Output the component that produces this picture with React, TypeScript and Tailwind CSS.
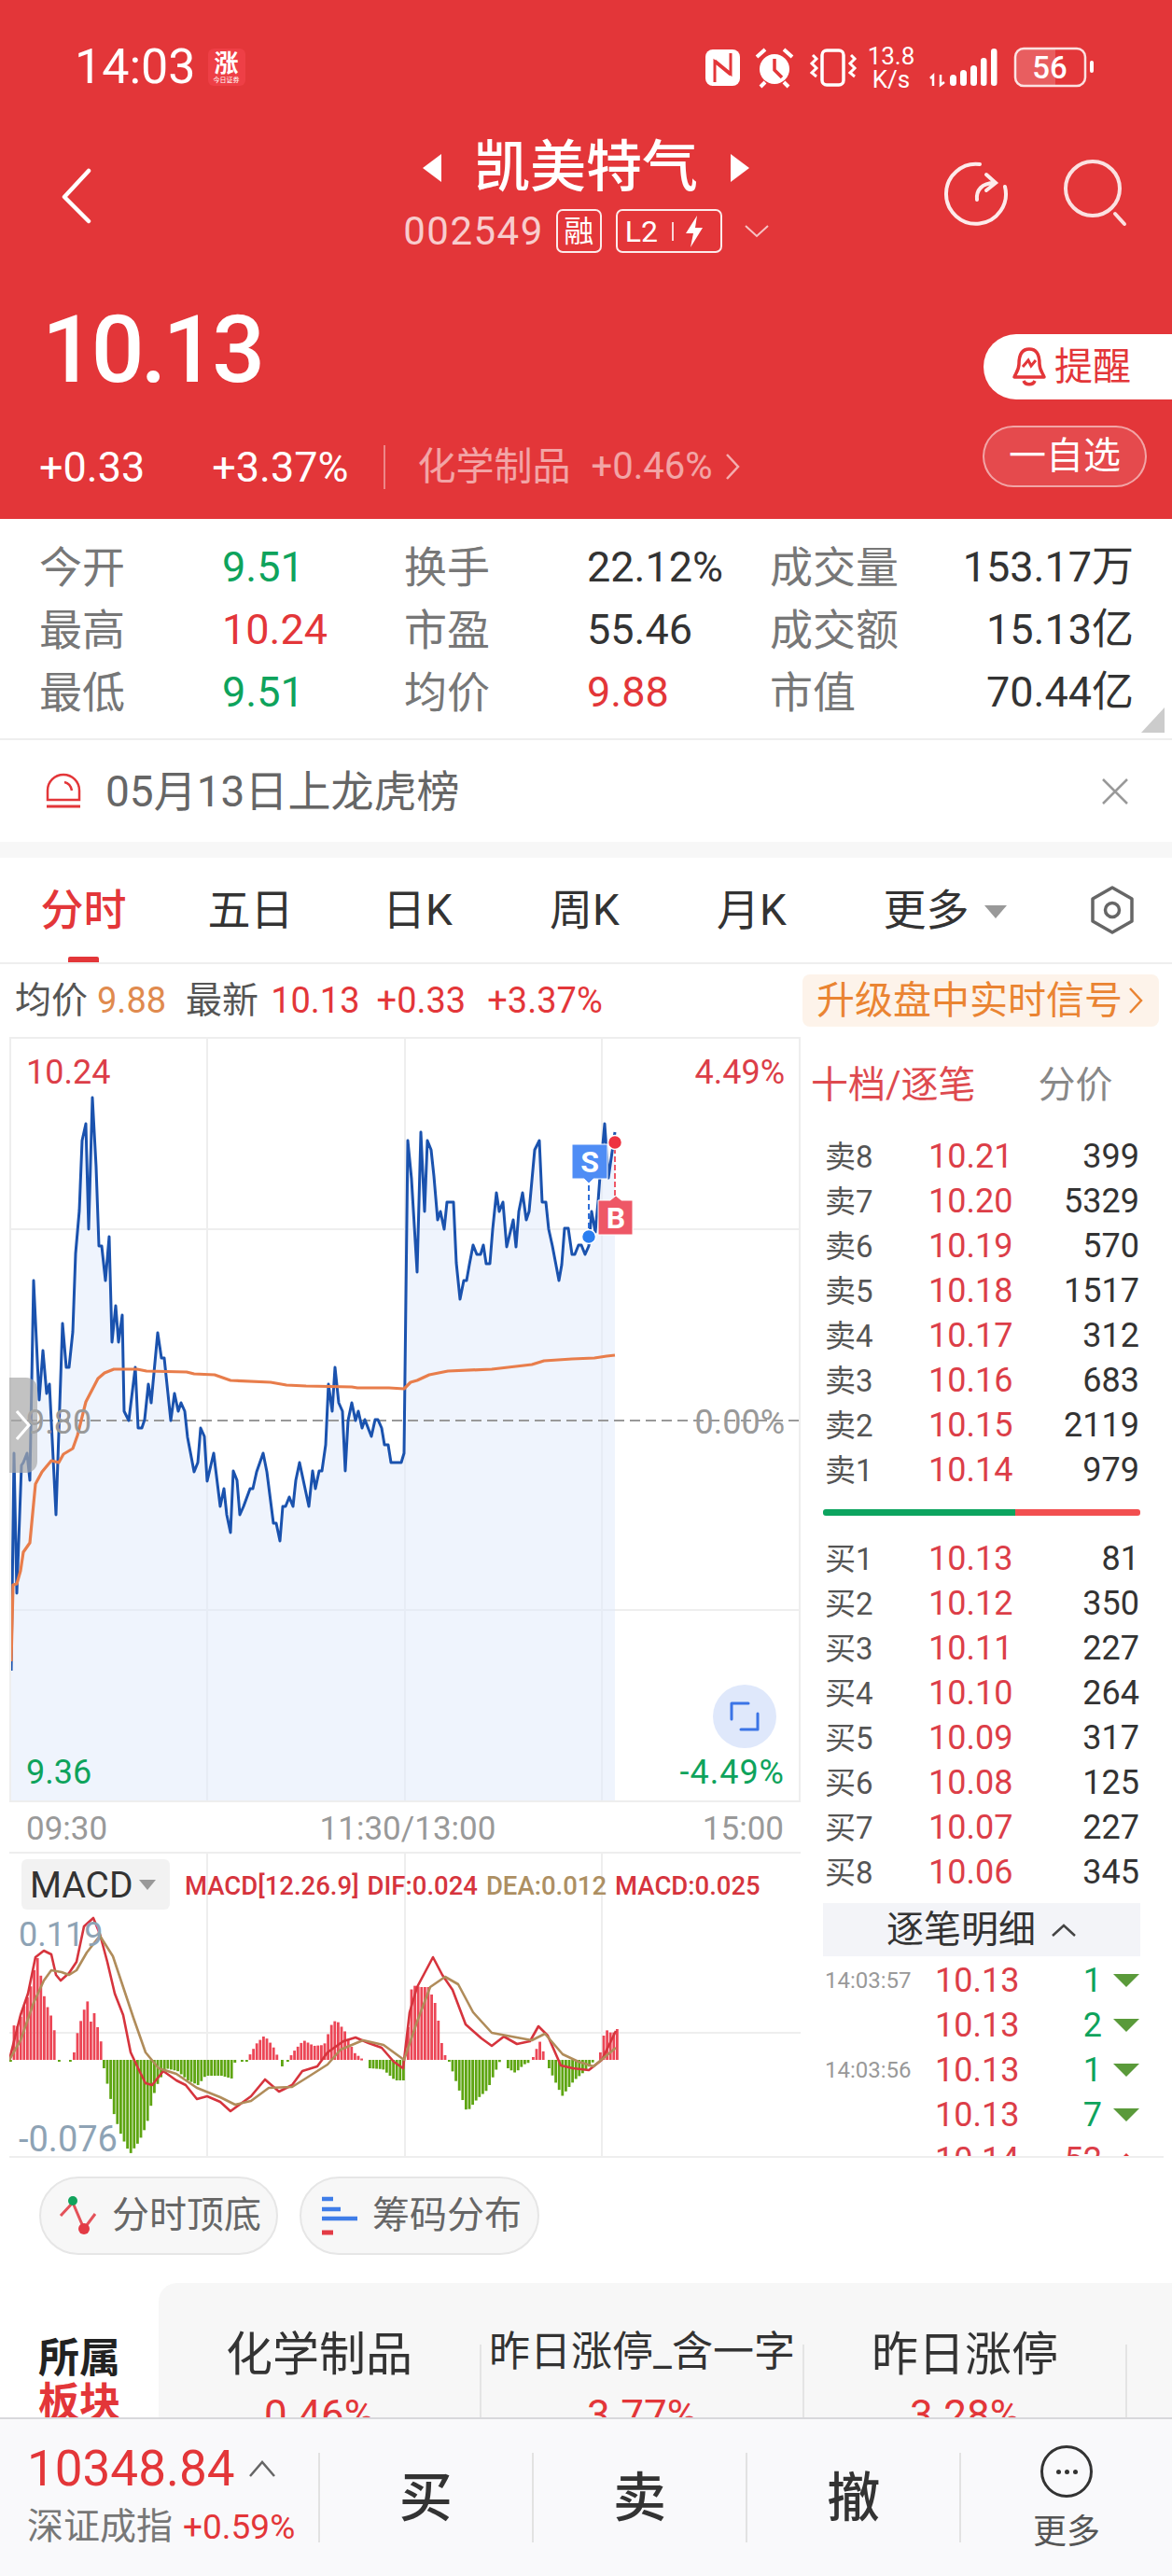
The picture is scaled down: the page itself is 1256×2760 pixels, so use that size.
import React from "react";

// traced price line, page coordinates
const PRICE: number[][] = [
	[12, 1790], [15, 1557], [18, 1707], [23, 1570], [25, 1567], [29, 1557], [32, 1586], [36, 1372], [42, 1500], [46, 1447], [50, 1493], [53, 1483], [60, 1623],
	[67, 1418], [71, 1465], [74, 1465], [78, 1427], [81, 1343], [85, 1297], [88, 1222], [92, 1204], [95, 1317], [99, 1176], [103, 1250], [106, 1335], [109, 1335],
	[113, 1372], [117, 1325], [120, 1438], [124, 1399], [127, 1438], [131, 1409], [133, 1512], [138, 1522], [145, 1465], [148, 1530], [152, 1530], [155, 1521],
	[159, 1483], [162, 1503], [169, 1428], [173, 1455], [176, 1455], [183, 1522], [187, 1493], [191, 1512], [194, 1503], [198, 1512], [201, 1540], [208, 1577],
	[212, 1567], [215, 1530], [219, 1539], [222, 1587], [229, 1557], [236, 1614], [240, 1595], [243, 1623], [247, 1642], [250, 1576], [254, 1586], [257, 1623],
	[261, 1614], [268, 1595], [271, 1595], [275, 1577], [282, 1557], [286, 1577], [293, 1632], [296, 1632], [300, 1651], [303, 1614], [306, 1614], [310, 1604],
	[314, 1614], [317, 1586], [321, 1567], [331, 1614], [335, 1576], [338, 1595], [342, 1576], [345, 1576], [349, 1548], [352, 1483], [356, 1512], [359, 1465],
	[363, 1503], [367, 1512], [370, 1576], [373, 1522], [377, 1503], [381, 1522], [384, 1512], [388, 1530], [391, 1521], [398, 1539], [402, 1521], [405, 1521],
	[409, 1530], [412, 1548], [416, 1548], [419, 1567], [430, 1567], [433, 1557], [437, 1222], [441, 1263], [447, 1363], [451, 1213], [455, 1298], [458, 1222],
	[462, 1232], [465, 1260], [469, 1307], [472, 1298], [476, 1317], [479, 1288], [486, 1288], [489, 1353], [493, 1392], [497, 1372], [500, 1372], [503, 1355],
	[507, 1334], [511, 1344], [515, 1344], [518, 1334], [521, 1354], [525, 1354], [528, 1317], [532, 1278], [535, 1298], [539, 1288], [543, 1336], [550, 1307],
	[553, 1336], [556, 1298], [560, 1278], [564, 1307], [567, 1298], [573, 1232], [578, 1222], [581, 1288], [585, 1288], [588, 1317], [592, 1335], [599, 1372],
	[602, 1355], [605, 1316], [609, 1316], [613, 1344], [616, 1344], [620, 1334], [623, 1334], [627, 1344], [631, 1335], [634, 1298], [638, 1320], [641, 1287],
	[643, 1260], [648, 1204], [652, 1262], [659, 1213],
];

const AVG: number[][] = [
	[12, 1780], [14, 1698], [18, 1697], [22, 1683], [25, 1663], [32, 1653], [38, 1590], [45, 1577], [55, 1565], [63, 1567], [68, 1558], [78, 1552], [83, 1538],
	[92, 1502], [105, 1477], [112, 1471], [122, 1467], [147, 1467], [157, 1469], [200, 1470], [208, 1472], [230, 1473], [247, 1479], [290, 1481], [307, 1484],
	[328, 1485], [377, 1486], [383, 1487], [417, 1487], [433, 1488], [440, 1481], [447, 1479], [460, 1473], [480, 1469], [527, 1467], [570, 1462], [583, 1458],
	[613, 1456], [637, 1455], [650, 1453], [659, 1452],
];

const DIF: number[][] = [
	[10, 2208], [22, 2160], [30, 2137], [38, 2098], [47, 2091], [55, 2095], [60, 2117], [65, 2123], [74, 2115], [82, 2103], [90, 2065], [100, 2056], [107, 2073],
	[115, 2103], [123, 2137], [132, 2160], [140, 2200], [148, 2217], [156, 2233], [163, 2235], [175, 2220], [189, 2230], [199, 2235], [211, 2250], [222, 2247],
	[236, 2253], [247, 2263], [258, 2255], [269, 2247], [284, 2229], [299, 2242], [313, 2235], [324, 2220], [340, 2215], [351, 2200], [368, 2188], [381, 2184],
	[395, 2190], [409, 2195], [422, 2210], [432, 2217], [439, 2157], [447, 2130], [455, 2115], [464, 2098], [474, 2117], [485, 2133], [499, 2170], [516, 2185],
	[527, 2193], [540, 2183], [554, 2191], [568, 2188], [577, 2172], [587, 2182], [601, 2214], [614, 2217], [631, 2219], [645, 2208], [660, 2177],
];

const DEA: number[][] = [
	[10, 2208], [22, 2187], [36, 2147], [47, 2123], [55, 2112], [66, 2114], [74, 2117], [82, 2112], [93, 2093], [107, 2075], [121, 2097], [132, 2130], [143, 2163],
	[156, 2200], [170, 2217], [189, 2223], [211, 2238], [236, 2248], [252, 2256], [269, 2252], [288, 2238], [313, 2237], [329, 2227], [351, 2213], [365, 2197],
	[389, 2187], [411, 2192], [433, 2208], [447, 2167], [461, 2130], [477, 2119], [491, 2127], [507, 2157], [527, 2179], [543, 2182], [570, 2187], [584, 2180],
	[603, 2202], [620, 2210], [636, 2215], [660, 2195],
];

// histogram envelope, segments of [x, y] in page coordinates
const BARS: number[][][] = [
	[[10, 2208], [14, 2167], [18, 2173], [22, 2157], [27, 2143], [30, 2137], [36, 2108], [40, 2095], [44, 2133], [49, 2150], [55, 2165], [59, 2190]],
	[[62, 2208], [64, 2225], [65, 2208]],
	[[74, 2208], [75, 2211]],
	[[78, 2200], [82, 2177], [88, 2157], [92, 2143], [96, 2167], [100, 2157], [104, 2177], [108, 2193]],
	[[110, 2217], [115, 2240], [121, 2267], [129, 2290], [138, 2309], [148, 2295], [156, 2277], [162, 2250], [166, 2237], [176, 2217], [189, 2220], [200, 2230], [211, 2235], [219, 2225], [236, 2225], [247, 2228], [251, 2208]],
	[[258, 2210], [259, 2208]],
	[[263, 2208], [274, 2190], [282, 2182], [291, 2193], [298, 2208]],
	[[301, 2215]],
	[[307, 2208], [315, 2197], [324, 2187], [335, 2193], [346, 2192], [354, 2170], [359, 2165], [368, 2177], [378, 2200], [388, 2208]],
	[[395, 2217], [409, 2218], [422, 2230], [433, 2230]],
	[[436, 2173], [440, 2128], [450, 2130], [458, 2130], [466, 2150], [472, 2190], [477, 2208]],
	[[480, 2210], [488, 2233], [499, 2264], [510, 2250], [521, 2240], [535, 2208]],
	[[543, 2217], [551, 2222], [560, 2213], [568, 2210]],
	[[570, 2205], [577, 2188], [584, 2208]],
	[[587, 2217], [601, 2247], [614, 2230], [628, 2218], [636, 2208]],
	[[642, 2200], [647, 2175], [655, 2180], [660, 2175]],
];

const barRects = () => {
	const out: { x: number; y: number; h: number; up: boolean }[] = [];
	BARS.forEach((seg) => {
		const start = seg[0][0];
		const end = seg[seg.length - 1][0];
		for (let x = start; x <= end + 0.01; x += 3.6) {
			let y = seg[seg.length - 1][1];
			for (let i = 0; i < seg.length - 1; i++) {
				if (x >= seg[i][0] && x <= seg[i + 1][0]) {
					const t = (x - seg[i][0]) / (seg[i + 1][0] - seg[i][0]);
					y = seg[i][1] + (seg[i + 1][1] - seg[i][1]) * t;
				}
			}
			const up = y < 2208;
			out.push({ x, y: up ? y : 2208, h: Math.max(Math.abs(y - 2208), 2), up });
		}
	});
	return out;
};

const pts = (a: number[][]) => a.map((p) => p.join(",")).join(" ");

const STATS = [
	["今开", "9.51", "text-[#0ea35c]", "换手", "22.12%", "text-[#333333]", "成交量", "153.17万"],
	["最高", "10.24", "text-[#e33639]", "市盈", "55.46", "text-[#333333]", "成交额", "15.13亿"],
	["最低", "9.51", "text-[#0ea35c]", "均价", "9.88", "text-[#e33639]", "市值", "70.44亿"],
];
const SELL = [
	["卖8", "10.21", "399"], ["卖7", "10.20", "5329"], ["卖6", "10.19", "570"], ["卖5", "10.18", "1517"],
	["卖4", "10.17", "312"], ["卖3", "10.16", "683"], ["卖2", "10.15", "2119"], ["卖1", "10.14", "979"],
];
const BUY = [
	["买1", "10.13", "81"], ["买2", "10.12", "350"], ["买3", "10.11", "227"], ["买4", "10.10", "264"],
	["买5", "10.09", "317"], ["买6", "10.08", "125"], ["买7", "10.07", "227"], ["买8", "10.06", "345"],
];
const TICKS = [
	["14:03:57", "10.13", "1", false], ["", "10.13", "2", false], ["14:03:56", "10.13", "1", false],
	["", "10.13", "7", false], ["", "10.14", "52", true],
] as [string, string, string, boolean][];
const SECTORS = [
	["化学制品", "0.46%", "text-[50px]"],
	["昨日涨停_含一字", "3.77%", "text-[44px]"],
	["昨日涨停", "3.28%", "text-[50px]"],
];

const BookRow = ({ row }: { row: string[] }) => (
	<div className="flex h-[48px] items-center">
		<span className="w-[113px] pl-[2px] text-[33px] text-[#555555]">{row[0]}</span>
		<span className="text-[36px] text-[#dc3e48]">{row[1]}</span>
		<span className="ml-auto pr-[1px] text-[36px] text-[#333333]">{row[2]}</span>
	</div>
);

const StatusBar = () => (
	<div className="mt-[40px] flex h-[64px] items-center pl-[80px]">
		<span className="text-[52px] leading-none">14:03</span>
		<div className="ml-[13px] flex h-[40px] w-[40px] flex-col items-center justify-center rounded-[6px] bg-[#ee3f46] leading-none">
			<span className="text-[26px] font-bold leading-[28px]">涨</span>
			<span className="text-[7px] leading-[8px]">今日证券</span>
		</div>
		<svg viewBox="750 40 430 64" className="ml-auto mr-[76px] h-[64px] w-[430px]">
			<rect x="756" y="53" width="37" height="39" rx="8" fill="#fff" />
			<path d="M766 88V66L783 80M783 57V79L766 65" stroke="#e33639" strokeWidth="3" fill="none" />
			<circle cx="830" cy="74" r="16" fill="#fff" />
			<path d="M830 63V75L838 83" stroke="#e33639" strokeWidth="3.5" fill="none" />
			<path d="M811 61L820 53M849 61L840 53M820 88L815 93M840 88L845 93" stroke="#fff" strokeWidth="4" fill="none" />
			<rect x="881" y="54" width="23" height="37" rx="5" stroke="#fff" strokeWidth="3.5" fill="none" />
			<path d="M871 59L875 63L870 68L875 73L870 78L875 82M912 59L916 63L911 68L916 73L911 78L916 82" stroke="#fff" strokeWidth="3" fill="none" />
			<text x="955" y="69" textAnchor="middle" fontSize="26" fill="#fff">13.8</text>
			<text x="955" y="94" textAnchor="middle" fontSize="26" fill="#fff">K/s</text>
			<path d="M1000 92V81L997 84M1008 80V91L1012 88" stroke="#fff" strokeWidth="2.5" fill="none" />
			<rect x="1018" y="80" width="7" height="12" rx="3.5" fill="#fff" />
			<rect x="1029" y="75" width="7" height="17" rx="3.5" fill="#fff" />
			<rect x="1040" y="70" width="7" height="22" rx="3.5" fill="#fff" />
			<rect x="1051" y="62" width="6.5" height="30" rx="3.2" fill="#fff" />
			<rect x="1062" y="52" width="6.5" height="40" rx="3.2" fill="#fff" />
			<path d="M1096 53H1131V91H1096A8 8 0 0 1 1088 83V61A8 8 0 0 1 1096 53Z" fill="#fff" fillOpacity="0.2" />
			<rect x="1088" y="52" width="75" height="40" rx="9" stroke="#fff" strokeOpacity="0.85" strokeWidth="2.5" fill="none" />
			<text x="1125" y="84" textAnchor="middle" fontSize="33" fontWeight="500" fill="#fff">56</text>
			<rect x="1168" y="65" width="4" height="13" rx="2" fill="#fff" />
		</svg>
	</div>
);

const Header = () => (
	<header className="flex h-[556px] flex-col bg-[#e33639] text-white">
		<StatusBar />
		{/* title */}
		<div className="mt-[40px] flex h-[140px] items-start">
			<svg viewBox="0 0 40 60" className="ml-[62px] mt-[36px] h-[60px] w-[40px]">
				<path d="M33 3L7 31L33 57" stroke="#fff" strokeWidth="4.5" fill="none" strokeLinecap="round" strokeLinejoin="round" />
			</svg>
			<div className="ml-[326px] flex w-[400px] flex-col items-center">
				<div className="flex h-[72px] items-center">
					<span className="h-0 w-0 border-y-[15px] border-r-[20px] border-y-transparent border-r-white" />
					<span className="mx-[35px] text-[60px] font-medium leading-none">凯美特气</span>
					<span className="h-0 w-0 border-y-[15px] border-l-[20px] border-y-transparent border-l-white" />
				</div>
				<div className="mt-[8px] flex h-[47px] items-center">
					<span className="text-[42px] leading-none tracking-[1.5px] text-white/75">002549</span>
					<span className="ml-[13px] flex h-[47px] w-[49px] items-center justify-center rounded-[7px] border-2 border-white/90 text-[32px] leading-none">融</span>
					<span className="ml-[15px] flex h-[47px] w-[114px] items-center rounded-[7px] border-2 border-white/90 pl-[8px] text-[32px] leading-none">
						L2
						<span className="ml-[15px] h-[20px] w-[2px] bg-white/80" />
						<svg viewBox="0 0 24 36" className="ml-[10px] h-[36px] w-[24px]">
							<path d="M15 1L3 20H11L8 35L21 14H13Z" fill="#fff" />
						</svg>
					</span>
					<svg viewBox="0 0 26 14" className="ml-[24px] h-[14px] w-[26px]">
						<path d="M1 1L13 12L25 1" stroke="#fff" strokeOpacity="0.7" strokeWidth="2" fill="none" />
					</svg>
				</div>
			</div>
			<svg viewBox="1005 165 210 82" className="ml-auto mr-[41px] mt-[21px] h-[82px] w-[210px]">
				<path d="M1050 176A32 32 0 1 0 1077 200" stroke="#fff" strokeOpacity="0.9" strokeWidth="4" fill="none" strokeLinecap="round" />
				<path d="M1047 214C1046 204 1052 196 1066 196M1057 187L1067 196L1057 204" stroke="#fff" strokeOpacity="0.9" strokeWidth="4" fill="none" strokeLinecap="round" />
				<circle cx="1171" cy="202" r="29" stroke="#fff" strokeOpacity="0.85" strokeWidth="4" fill="none" />
				<path d="M1195 229L1205 240" stroke="#fff" strokeOpacity="0.85" strokeWidth="4" strokeLinecap="round" />
			</svg>
		</div>
		{/* price */}
		<div className="mt-[74px] flex h-[70px] items-center justify-between">
			<span className="mb-[36px] ml-[45px] text-[100px] font-medium leading-none tracking-[-4px]">10.13</span>
			<div className="flex h-[70px] w-[202px] items-center rounded-l-[35px] bg-white pl-[30px] text-[#e33639]">
				<svg viewBox="0 0 38 44" className="h-[44px] w-[38px]">
					<path d="M19 3C10 3 8 11 8 19C8 25 5 28 3 33H35C33 28 30 25 30 19C30 11 28 3 19 3Z" stroke="#e33639" strokeWidth="3.5" fill="none" strokeLinejoin="round" />
					<path d="M12 22L18 15L21 21L26 15" stroke="#e33639" strokeWidth="3" fill="none" />
					<path d="M13 37C15 42 23 42 25 37" stroke="#e33639" strokeWidth="3.5" fill="none" />
				</svg>
				<span className="ml-[8px] text-[41px] leading-none">提醒</span>
			</div>
		</div>
		<div className="mt-[28px] flex h-[66px] items-center">
			<div className="flex items-center pt-[22px]">
				<span className="ml-[42px] text-[45px] leading-none">+0.33</span>
				<span className="ml-[72px] text-[45px] leading-none">+3.37%</span>
				<span className="ml-[37px] h-[47px] w-[2px] bg-white/40" />
				<span className="ml-[35px] text-[41px] leading-none text-white/55">化学制品</span>
				<span className="ml-[22px] text-[40px] leading-none text-white/55">+0.46%</span>
				<svg viewBox="0 0 16 30" className="ml-[13px] h-[30px] w-[16px]">
					<path d="M2 2L14 15L2 28" stroke="#fff" strokeOpacity="0.6" strokeWidth="2.5" fill="none" />
				</svg>
			</div>
			<span className="ml-auto mr-[27px] flex h-[66px] w-[176px] items-center justify-center rounded-[33px] border-2 border-white/50 bg-white/10 text-[40px] leading-none">一自选</span>
		</div>
	</header>
);

const Stats = () => (
	<section className="relative h-[237px] border-b-2 border-[#eeeeee] pt-[18px]">
		{STATS.map((r) => (
			<div key={r[0]} className="ml-[42px] grid h-[67px] grid-cols-[196px_195px_196px_196px_150px_240px] items-center text-[45px] leading-none">
				<span className="text-[46px] text-[#777777]">{r[0]}</span>
				<span className={r[2]}>{r[1]}</span>
				<span className="text-[46px] text-[#777777]">{r[3]}</span>
				<span className={r[5]}>{r[4]}</span>
				<span className="text-[46px] text-[#777777]">{r[6]}</span>
				<span className="text-right text-[#333333]">{r[7]}</span>
			</div>
		))}
		<span className="absolute right-[8px] top-[202px] h-0 w-0 border-b-[27px] border-l-[25px] border-b-[#cccccc] border-l-transparent" />
	</section>
);

const Notice = () => (
	<div className="flex h-[126px] items-center border-b-[17px] border-[#f7f7f7]">
		<svg viewBox="0 0 40 40" className="ml-[48px] h-[40px] w-[40px]">
			<path d="M3 29V19A17 17 0 0 1 37 19V29Z" stroke="#e33639" strokeWidth="2.5" fill="none" />
			<path d="M21 10C26 11 28 14 29 19" stroke="#e33639" strokeWidth="2.5" fill="none" />
			<path d="M2 36H38" stroke="#e33639" strokeWidth="3" />
		</svg>
		<span className="ml-[25px] text-[46px] leading-none text-[#666666]">05月13日上龙虎榜</span>
		<svg viewBox="0 0 30 30" className="ml-auto mr-[46px] h-[30px] w-[30px]">
			<path d="M2 2L28 28M28 2L2 28" stroke="#999999" strokeWidth="2.5" />
		</svg>
	</div>
);

const Tabs = () => (
	<div className="flex h-[114px] items-center border-b-2 border-[#eeeeee] text-[46px] leading-none text-[#333333]">
		<div className="relative flex h-full w-[179px] items-center justify-center font-medium text-[#e33639]">
			分时
			<span className="absolute bottom-0 h-[6px] w-[33px] rounded-t-[2px] bg-[#e33639]" />
		</div>
		<div className="w-[179px] text-center">五日</div>
		<div className="w-[179px] text-center">日K</div>
		<div className="w-[179px] text-center">周K</div>
		<div className="w-[179px] text-center">月K</div>
		<div className="flex w-[235px] items-center justify-center">
			更多
			<span className="ml-[16px] mt-[4px] h-0 w-0 border-x-[12px] border-t-[14px] border-x-transparent border-t-[#999999]" />
		</div>
		<svg viewBox="0 0 48 52" className="ml-[38px] h-[52px] w-[48px]">
			<path d="M24 2L45 14V38L24 50L3 38V14Z" stroke="#666666" strokeWidth="3.5" fill="none" strokeLinejoin="round" />
			<circle cx="24" cy="26" r="7.5" stroke="#666666" strokeWidth="3.5" fill="none" />
		</svg>
	</div>
);

const InfoRow = () => (
	<div className="flex h-[78px] items-center pl-[16px] text-[38px] leading-none">
		<span className="text-[39px] text-[#555555]">均价</span>
		<span className="ml-[10px] text-[#e08a4e]">9.88</span>
		<span className="ml-[21px] text-[39px] text-[#555555]">最新</span>
		<span className="ml-[13px] text-[#e33639]">10.13</span>
		<span className="ml-[18px] text-[#e33639]">+0.33</span>
		<span className="ml-[23px] text-[#e33639]">+3.37%</span>
		<div className="ml-auto mr-[14px] flex h-[56px] w-[382px] items-center rounded-[8px] bg-[#fdf3ea] pl-[15px] text-[41px] text-[#ea8432]">
			升级盘中实时信号
			<svg viewBox="0 0 16 30" className="ml-[6px] h-[30px] w-[16px]">
				<path d="M2 2L14 15L2 28" stroke="#ea8432" strokeWidth="2.5" fill="none" />
			</svg>
		</div>
	</div>
);

const PriceChart = () => (
	<div className="relative h-[820px] border-2 border-[#eeeeee] leading-none">
		<svg viewBox="12 1113 844 816" className="block h-[816px] w-[844px]">
			<path d="M222 1113V1929M434 1113V1929M645 1113V1929M12 1317H856M12 1725H856" stroke="#eeeeee" strokeWidth="2" />
			<polygon points={`12,1929 ${pts(PRICE)} 659,1929`} fill="#dfe9fb" fillOpacity="0.5" />
			<path d="M12 1522H856" stroke="#999999" strokeWidth="2" strokeDasharray="11 6" />
			<polyline points={pts(PRICE)} stroke="#1a52ae" strokeWidth="3" fill="none" strokeLinejoin="round" />
			<polyline points={pts(AVG)} stroke="#e87d4b" strokeWidth="3.2" fill="none" strokeLinejoin="round" />
			<path d="M631 1270V1320" stroke="#2f6fd8" strokeWidth="2" strokeDasharray="6 4" />
			<path d="M659 1230V1282" stroke="#ee5766" strokeWidth="2" strokeDasharray="6 3" />
			<path d="M613 1226H651V1263H636L631 1268L626 1263H613Z" fill="#4f8df5" stroke="#fff" strokeWidth="1" />
			<text x="632" y="1256" textAnchor="middle" fontSize="32" fontWeight="700" fill="#fff">S</text>
			<path d="M641 1286H654L660 1281L666 1286H678V1323H641Z" fill="#ee5766" stroke="#fff" strokeWidth="1" />
			<text x="660" y="1316" textAnchor="middle" fontSize="32" fontWeight="700" fill="#fff">B</text>
			<circle cx="631" cy="1325" r="7.5" fill="#2a7ef0" stroke="#fff" strokeWidth="1.5" />
			<circle cx="659" cy="1224" r="7.5" fill="#ee3340" stroke="#fff" strokeWidth="1.5" />
		</svg>
		<span className="absolute left-[16px] top-[18px] text-[36px] text-[#dc3e48]">10.24</span>
		<span className="absolute right-[15px] top-[18px] text-[36px] text-[#dc3e48]">4.49%</span>
		<span className="absolute left-[16px] top-[393px] text-[36px] text-[#999999]">9.80</span>
		<span className="absolute right-[15px] top-[393px] text-[36px] text-[#999999]">0.00%</span>
		<span className="absolute left-[16px] top-[768px] text-[36px] text-[#0ea35c]">9.36</span>
		<span className="absolute right-[15px] top-[768px] text-[36px] tracking-[1px] text-[#0ea35c]">-4.49%</span>
		<div className="absolute right-[24px] top-[692px] flex h-[68px] w-[68px] items-center justify-center rounded-full bg-[#dfe8fb]">
			<svg viewBox="0 0 32 32" className="h-[32px] w-[32px]">
				<path d="M2 19V2H20M30 13V30H12" stroke="#3b74e6" strokeWidth="3" fill="none" strokeLinecap="round" strokeLinejoin="round" />
			</svg>
		</div>
		<div className="absolute left-[-2px] top-[363px] flex h-[102px] w-[30px] items-center rounded-r-[12px] bg-[#a8a8a8]/70">
			<svg viewBox="0 0 16 32" className="ml-[7px] h-[32px] w-[16px]">
				<path d="M1 1L14 16L1 31" stroke="#fff" strokeWidth="3" fill="none" />
			</svg>
		</div>
	</div>
);

const MacdChart = () => (
	<div className="relative h-[326px] border-t-2 border-[#eeeeee] leading-none">
		<svg viewBox="10 1987 848 324" className="block h-[324px] w-[848px]">
			<path d="M222 1987V2311M434 1987V2311M645 1987V2311M10 2179H858" stroke="#eeeeee" strokeWidth="2" />
			{barRects().map((b, i) => (
				<rect key={i} x={b.x} y={b.y} width="2.8" height={b.h} fill={b.up ? "#ec4656" : "#5ea512"} />
			))}
			<polyline points={pts(DIF)} stroke="#d6343d" strokeWidth="2.6" fill="none" strokeLinejoin="round" />
			<polyline points={pts(DEA)} stroke="#b08c5a" strokeWidth="2.6" fill="none" strokeLinejoin="round" />
		</svg>
		<div className="absolute left-[13px] top-[6px] flex h-[54px] w-[159px] items-center rounded-[6px] bg-[#f2f2f2] pl-[9px] text-[39px] text-[#333333]">
			<span className="mt-[2px]">MACD</span>
			<span className="ml-[6px] h-0 w-0 border-x-[9px] border-t-[11px] border-x-transparent border-t-[#999999]" />
		</div>
		<div className="absolute left-[188px] top-[21px] flex text-[27.5px] font-medium text-[#d6343d]">
			<span>MACD[12.26.9]</span>
			<span className="ml-[9px]">DIF:0.024</span>
			<span className="ml-[9px] text-[#ad8f62]">DEA:0.012</span>
			<span className="ml-[9px]">MACD:0.025</span>
		</div>
		<span className="absolute left-[10px] top-[69px] text-[36px] text-[#8ea3b5]">0.119</span>
		<span className="absolute left-[10px] top-[287px] text-[38px] text-[#8ea3b5]">-0.076</span>
	</div>
);

const OrderBook = () => (
	<div className="h-full w-[398px] overflow-hidden">
		<div className="flex h-[104px] items-center pl-[11px] text-[40px] leading-none">
			<span className="text-[#de4a4f]">十档/逐笔</span>
			<span className="ml-[67px] text-[#888888]">分价</span>
		</div>
		<div className="ml-[24px] w-[340px] leading-none">
			{SELL.map((r) => <BookRow key={r[0]} row={r} />)}
			<div className="mt-[18px] flex h-[7px] overflow-hidden rounded-[3px]">
				<span className="w-[206px] bg-[#0ca45f]" />
				<span className="flex-1 bg-[#f24f50]" />
			</div>
			<div className="mt-[22px]">
				{BUY.map((r) => <BookRow key={r[0]} row={r} />)}
			</div>
			<div className="mt-[9px] flex h-[57px] items-center justify-center bg-[#f3f4f8] text-[40px] text-[#333333]">
				逐笔明细
				<svg viewBox="0 0 28 16" className="ml-[16px] h-[16px] w-[28px]">
					<path d="M2 14L14 3L26 14" stroke="#444444" strokeWidth="2.5" fill="none" />
				</svg>
			</div>
			<div className="mt-[2px]">
				{TICKS.map((t, i) => (
					<div key={i} className="flex h-[48px] items-center">
						<span className="w-[120px] pl-[2px] text-[24px] text-[#999999]">{t[0]}</span>
						<span className="text-[36px] text-[#dc3e48]">{t[1]}</span>
						<span className={`ml-auto text-[36px] ${t[3] ? "text-[#dc3e48]" : "text-[#0ea35c]"}`}>{t[2]}</span>
						<span className={`ml-[12px] mr-[1px] h-0 w-0 border-x-[14px] border-x-transparent ${t[3] ? "border-b-[14px] border-b-[#e33639]" : "border-t-[14px] border-t-[#5a9a3a]"}`} />
					</div>
				))}
			</div>
		</div>
	</div>
);

const Sectors = () => (
	<div className="mt-[30px] flex h-[200px]">
		<div className="w-[170px] pl-[41px] pt-[57px] text-[44px] font-bold leading-[48px]">
			<div className="text-[#222222]">所属</div>
			<div className="text-[#e33639]">板块</div>
		</div>
		<div className="flex flex-1 rounded-tl-[20px] bg-[#f7f7f7] pt-[66px]">
			{SECTORS.map((s) => (
				<div key={s[0]} className="flex h-[134px] w-[346px] flex-col items-center border-r-2 border-[#e4e4e4] leading-none">
					<span className={`-mt-[14px] h-[50px] text-[#333333] ${s[2]}`}>{s[0]}</span>
					<span className="mt-[18px] text-[44px] text-[#e33639]">{s[1]}</span>
				</div>
			))}
		</div>
	</div>
);

const BottomBar = () => (
	<footer className="flex h-[170px] items-start border-t-2 border-[#d8d8dc] bg-[#f9f9fb] leading-none">
		<div className="mt-[36px] h-[96px] w-[343px] border-r-2 border-[#e2e2e2] pl-[29px]">
			<div className="-mt-[3px] flex h-[40px] items-center">
				<span className="text-[53px] text-[#e33639]">10348.84</span>
				<svg viewBox="0 0 30 18" className="ml-[15px] h-[18px] w-[30px]">
					<path d="M2 17L15 2L28 17" stroke="#666666" strokeWidth="2.5" fill="none" />
				</svg>
			</div>
			<div className="mt-[23px] flex items-center">
				<span className="text-[39px] text-[#777777]">深证成指</span>
				<span className="ml-[11px] text-[37px] text-[#e33639]">+0.59%</span>
			</div>
		</div>
		{["买", "卖", "撤"].map((t) => (
			<div key={t} className="mt-[36px] flex h-[96px] w-[229.5px] items-center justify-center border-r-2 border-[#e2e2e2] text-[57px] font-medium text-[#333333]">{t}</div>
		))}
		<div className="mt-[28px] flex w-[226px] flex-col items-center">
			<div className="flex h-[56px] w-[56px] items-center justify-center gap-[4px] rounded-full border-[3px] border-[#333333]">
				<span className="h-[5px] w-[5px] rounded-full bg-[#333333]" />
				<span className="h-[5px] w-[5px] rounded-full bg-[#333333]" />
				<span className="h-[5px] w-[5px] rounded-full bg-[#333333]" />
			</div>
			<span className="mt-[19px] text-[36px] text-[#555555]">更多</span>
		</div>
	</footer>
);

export default function App() {
	return (
		<div className="flex h-[2760px] w-[1256px] flex-col overflow-hidden bg-white [font-family:Roboto,'Noto_Sans_CJK_SC',sans-serif]">
			<div className="min-h-0 flex-1 overflow-hidden">
				<Header />
				<Stats />
				<Notice />
				<Tabs />
				<InfoRow />
				<div className="flex h-[1199px]">
					<div className="ml-[10px] w-[848px]">
						<PriceChart />
						<div className="flex h-[53px] items-center justify-between px-[18px] pt-[3px] text-[35px] leading-none text-[#999999]">
							<span>09:30</span>
							<span className="ml-[6px]">11:30/13:00</span>
							<span>15:00</span>
						</div>
						<MacdChart />
					</div>
					<OrderBook />
				</div>
				<div className="ml-[10px] h-[2px] w-[1237px] bg-[#eeeeee]" />
				<div className="mt-[20px] flex h-[84px] gap-[23px] pl-[42px]">
					<div className="flex w-[256px] items-center rounded-[42px] border-2 border-[#e6e6e6] bg-[#f7f7f7] pl-[18px] text-[40px] leading-none text-[#666666]">
						<svg viewBox="0 0 44 44" className="h-[44px] w-[44px]">
							<path d="M3 22L16 8L28 36L40 20" stroke="#e4525a" strokeWidth="3" fill="none" />
							<circle cx="16" cy="6" r="5" fill="#12a35c" />
							<circle cx="28" cy="36" r="6" fill="#e33b45" />
						</svg>
						<span className="ml-[14px]">分时顶底</span>
					</div>
					<div className="flex w-[257px] items-center rounded-[42px] border-2 border-[#e6e6e6] bg-[#f7f7f7] pl-[21px] text-[40px] leading-none text-[#666666]">
						<svg viewBox="0 0 40 44" className="h-[44px] w-[40px]">
							<path d="M1 4H13M1 15H21" stroke="#3f7de8" strokeWidth="4.5" />
							<path d="M1 25H39" stroke="#3f7de8" strokeWidth="4.5" />
							<path d="M1 40H13" stroke="#e33b45" strokeWidth="5" />
						</svg>
						<span className="ml-[15px]">筹码分布</span>
					</div>
				</div>
				<Sectors />
			</div>
			<BottomBar />
		</div>
	);
}
